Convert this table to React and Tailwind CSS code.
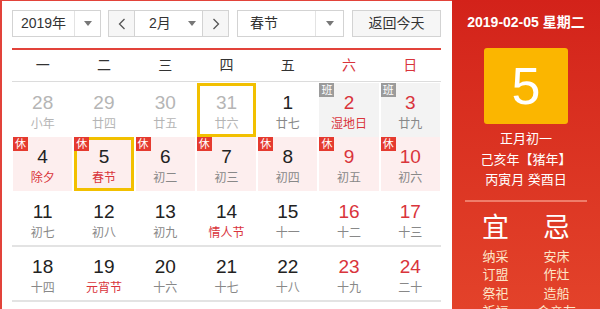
import { useState } from 'react';

const FONT = { fontFamily: '"Liberation Sans", "Noto Sans CJK SC", sans-serif' };

const weekdays = ['一', '二', '三', '四', '五', '六', '日'];

// kind: prev = last month, rest = 休, work = 班
const rows = [
  [
    { d: 28, l: '小年', prev: true },
    { d: 29, l: '廿四', prev: true },
    { d: 30, l: '廿五', prev: true },
    { d: 31, l: '廿六', prev: true, hover: true },
    { d: 1, l: '廿七' },
    { d: 2, l: '湿地日', red: true, lred: true, work: true },
    { d: 3, l: '廿九', red: true, work: true },
  ],
  [
    { d: 4, l: '除夕', lred: true, rest: true },
    { d: 5, l: '春节', lred: true, rest: true, selected: true },
    { d: 6, l: '初二', rest: true },
    { d: 7, l: '初三', rest: true },
    { d: 8, l: '初四', rest: true },
    { d: 9, l: '初五', red: true, rest: true },
    { d: 10, l: '初六', red: true, rest: true },
  ],
  [
    { d: 11, l: '初七' },
    { d: 12, l: '初八' },
    { d: 13, l: '初九' },
    { d: 14, l: '情人节', lred: true },
    { d: 15, l: '十一' },
    { d: 16, l: '十二', red: true },
    { d: 17, l: '十三', red: true },
  ],
  [
    { d: 18, l: '十四' },
    { d: 19, l: '元宵节', lred: true },
    { d: 20, l: '十六' },
    { d: 21, l: '十七' },
    { d: 22, l: '十八' },
    { d: 23, l: '十九', red: true },
    { d: 24, l: '二十', red: true },
  ],
];

const Arrow = () => (
  <svg width="8" height="5" viewBox="0 0 8 5">
    <path d="M0 0 L8 0 L4 5 Z" fill="#777" />
  </svg>
);

const Chevron = ({ dir }) => (
  <svg width="8" height="12" viewBox="0 0 8 12">
    <path
      d={dir === 'left' ? 'M6.5 1 L1.5 6 L6.5 11' : 'M1.5 1 L6.5 6 L1.5 11'}
      fill="none"
      stroke="#555"
      strokeWidth="1.3"
    />
  </svg>
);

const DayCell = ({ day }) => {
  let bg = 'bg-white';
  if (day.rest) bg = 'bg-[#fdeeee]';
  if (day.work) bg = 'bg-[#f3f3f3]';
  const numColor = day.prev ? 'text-[#b5b5b5]' : day.red ? 'text-[#d9343b]' : 'text-[#222]';
  const lunarColor = day.prev ? 'text-[#b5b5b5]' : day.lred ? 'text-[#d9343b]' : 'text-[#888]';
  const border = day.selected || day.hover ? 'border-[3px] border-[#f2c000]' : 'border-[3px] border-transparent';

  return (
    <div className={`relative h-full mx-px ${bg}`}>
      <div className={`flex flex-col items-center h-full pt-[6px] ${border}`}>
        <span className={`text-[19px] leading-[22px] ${numColor}`}>{day.d}</span>
        <span className={`text-[12px] leading-[16px] mt-[2px] ${lunarColor}`}>{day.l}</span>
      </div>
      {day.rest && (
        <span className="absolute left-0 top-0 w-[15px] h-[14px] bg-[#e53a2f] text-white text-[11px] leading-[14px] text-center">
          休
        </span>
      )}
      {day.work && (
        <span className="absolute left-0 top-0 w-[15px] h-[14px] bg-[#9b9b9b] text-white text-[11px] leading-[14px] text-center">
          班
        </span>
      )}
    </div>
  );
};

const App = () => {
  const [year] = useState('2019年');
  const [month] = useState('2月');
  const [holiday] = useState('春节');

  const yi = ['纳采', '订盟', '祭祀', '祈福'];
  const ji = ['安床', '作灶', '造船', '会亲友'];

  return (
    <div className="w-[600px] h-[309px] overflow-hidden flex bg-white" style={FONT}>
      {/* left: calendar */}
      <div className="w-[452px] h-full border-l-2 border-t border-[#e2433a] pl-[10px] pt-[9px]">
        <div className="w-[429px] flex items-center h-[27px] text-[14px] text-[#333]">
          <div className="w-[89px] h-full flex border border-[#d3d3d3]">
            <span className="flex-1 flex items-center justify-center">{year}</span>
            <span className="w-[26px] flex items-center justify-center border-l border-[#e3e3e3]">
              <Arrow />
            </span>
          </div>
          <div className="ml-[7px] w-[121px] h-full flex border border-[#d3d3d3]">
            <span className="w-[26px] flex items-center justify-center bg-[#f6f6f6] border-r border-[#d3d3d3]">
              <Chevron dir="left" />
            </span>
            <span className="flex-1 flex items-center pl-[14px]">{month}</span>
            <span className="w-[20px] flex items-center justify-center">
              <Arrow />
            </span>
            <span className="w-[26px] flex items-center justify-center bg-[#f6f6f6] border-l border-[#d3d3d3]">
              <Chevron dir="right" />
            </span>
          </div>
          <div className="ml-[8px] w-[107px] h-full flex border border-[#d3d3d3]">
            <span className="flex-1 flex items-center pl-[12px]">{holiday}</span>
            <span className="w-[28px] flex items-center justify-center border-l border-[#e3e3e3]">
              <Arrow />
            </span>
          </div>
          <button className="ml-[8px] w-[89px] h-full border border-[#d3d3d3] bg-[#f6f6f6] text-[14px] text-[#333]">
            返回今天
          </button>
        </div>

        <div className="w-[429px] mt-[11px] h-[2px] bg-[#e2433a]" />

        <div className="w-[429px] grid grid-cols-7 h-[32px] items-center border-b border-[#dcdcdc] text-[14px]">
          {weekdays.map((w, i) => (
            <span key={w} className={`text-center ${i >= 5 ? 'text-[#d9343b]' : 'text-[#333]'}`}>
              {w}
            </span>
          ))}
        </div>

        {rows.map((row, ri) => (
          <div
            key={ri}
            className={`w-[429px] grid grid-cols-7 h-[55px] ${ri >= 2 ? 'border-b-2 border-[#e3e3e3]' : ri === 1 ? 'pb-[1px]' : 'pt-[1px]'}`}
          >
            {row.map((day) => (
              <DayCell key={`${ri}-${day.d}`} day={day} />
            ))}
          </div>
        ))}
      </div>

      {/* right: selected day */}
      <div className="flex-1 h-full overflow-hidden bg-gradient-to-b from-[#d3221a] to-[#e3422a] flex flex-col items-center text-white">
        <div className="shrink-0 mt-[13px] text-[14px] font-bold leading-[18px]">2019-02-05 星期二</div>
        <div className="shrink-0 mt-[17px] w-[84px] h-[76px] rounded-[3px] bg-[#fbb600] flex items-center justify-center text-[52px] leading-none">
          5
        </div>
        <div className="shrink-0 mt-[5px] text-[13px] leading-[20.5px] text-center">
          <div>正月初一</div>
          <div>己亥年【猪年】</div>
          <div>丙寅月 癸酉日</div>
        </div>
        <div className="shrink-0 mt-[9px] w-[122px] h-[2px] bg-[#ef7d6a]" />
        <div className="shrink-0 mt-[10px] w-[122px] grid grid-cols-2 text-center">
          <div className="flex flex-col items-center">
            <span className="text-[27px] leading-[32px] mb-[4px]">宜</span>
            {yi.map((t) => (
              <span key={t} className="text-[13px] leading-[18.5px] text-[#fde6c8]">{t}</span>
            ))}
          </div>
          <div className="flex flex-col items-center">
            <span className="text-[27px] leading-[32px] mb-[4px]">忌</span>
            {ji.map((t) => (
              <span key={t} className="text-[13px] leading-[18.5px] text-[#fde6c8]">{t}</span>
            ))}
          </div>
        </div>
      </div>
    </div>
  );
};

export default App;
